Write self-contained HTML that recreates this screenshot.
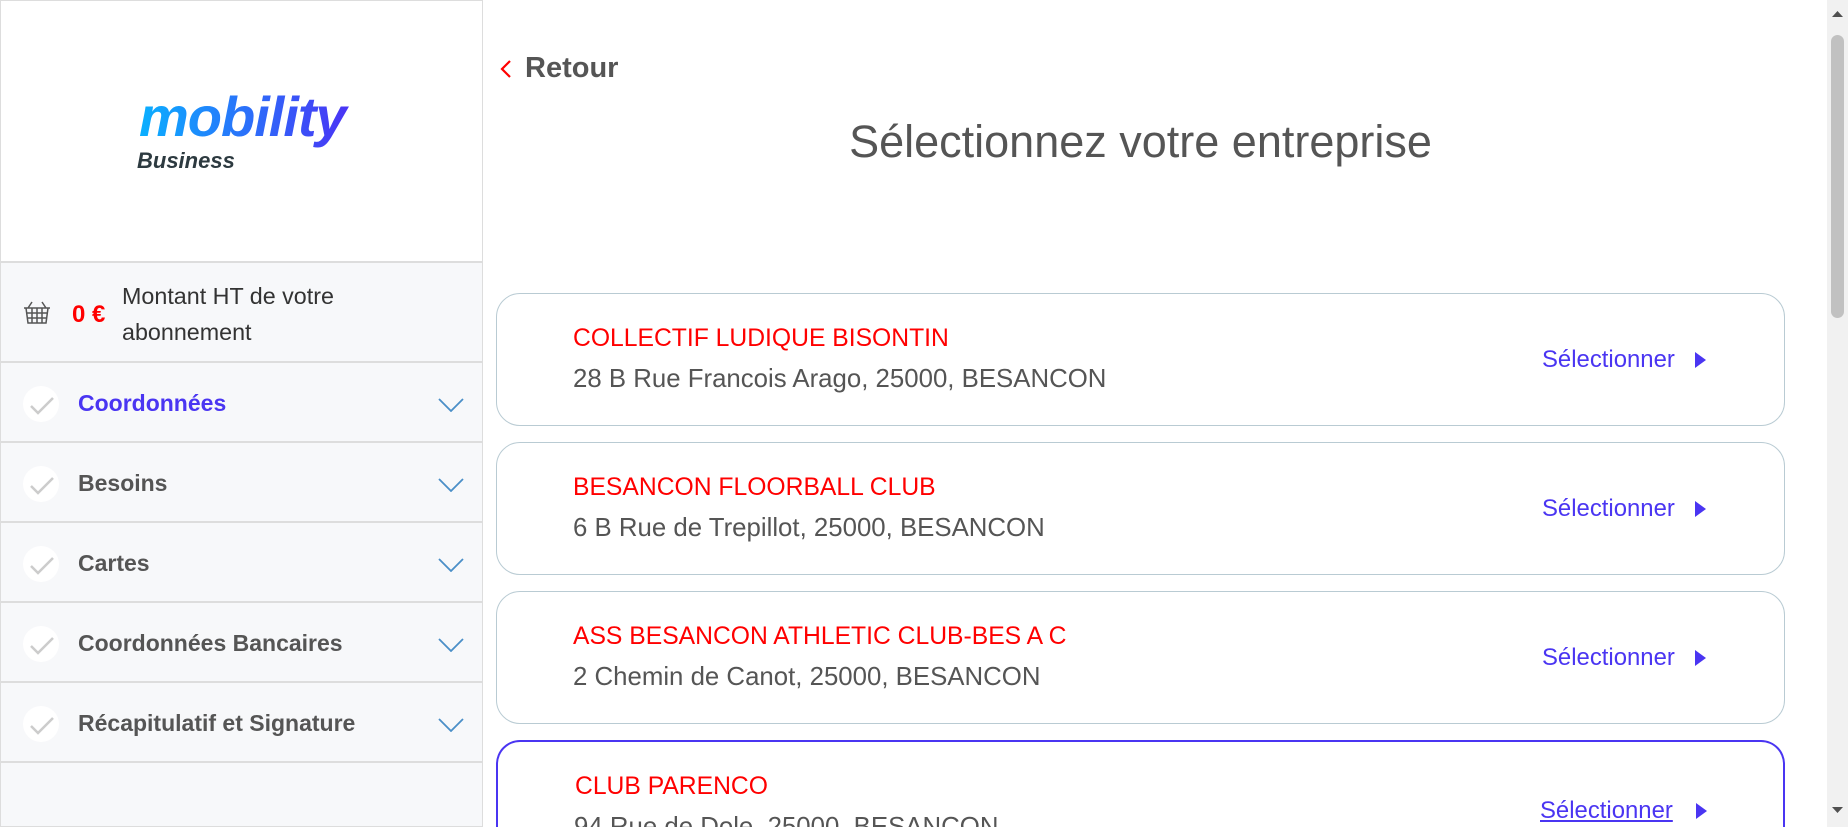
<!DOCTYPE html>
<html style="width:1848px;height:827px;overflow:hidden"><head><meta charset="utf-8"><style>
*{box-sizing:border-box;margin:0;padding:0}
body{width:1848px;height:827px;overflow:hidden;background:#fff;font-family:"Liberation Sans",Arial,sans-serif;position:relative}
#wrap{position:absolute;left:0;top:0;width:1848px;height:827px;overflow:hidden}
.side{position:absolute;left:0;top:0;width:483px;height:827px;background:#f7f8fa;border:1px solid #ddd}
.logo{height:262px;background:#fff;border-bottom:2px solid #ddd;position:relative}
.amt{height:100px;border-bottom:2px solid #ddd;position:relative}
.item{height:80px;border-bottom:2px solid #ddd;position:relative}
.chk{position:absolute;left:22px;top:23px;width:36px;height:36px;border-radius:50%;background:#fff}
.item .t{position:absolute;left:77px;top:27px;font-size:23px;font-weight:bold;color:#555}
.item svg.ch{position:absolute;left:437px;top:35px}
.card{position:absolute;left:496px;width:1289px;height:133px;border:1px solid #b9cbd3;border-radius:24px;overflow:hidden}
.card .n{position:absolute;left:76px;top:31px;font-size:24.7px;color:#f00}
.card .a{position:absolute;left:76px;top:71px;font-size:25.8px;color:#555;white-space:nowrap}
.card .s{position:absolute;left:1045px;top:52px;font-size:23.9px;color:#4a35f2}
.card svg.ar{position:absolute;left:1198px;top:58px}
</style></head><body><div id="wrap">
<div class="side">
 <div class="logo">
  <svg width="220" height="100" style="position:absolute;left:130px;top:80px">
   <defs><linearGradient id="g" x1="0" x2="1"><stop offset="0" stop-color="#0ab0ff"/><stop offset="1" stop-color="#4a33f5"/></linearGradient></defs>
   <text x="8" y="55" font-family="Liberation Sans" font-weight="bold" font-style="italic" font-size="56" fill="url(#g)" letter-spacing="-1">mobility</text>
   <text x="6" y="87" font-family="Liberation Sans" font-style="italic" font-weight="bold" font-size="22" fill="#2d3a40">Business</text>
  </svg>
 </div>
 <div class="amt">
  <svg width="28" height="26" style="position:absolute;left:22px;top:37px" fill="none" stroke="#555" stroke-width="1.5"><path d="M1 8h26M3 8l2 15h18l2-15M5 8l4-6M23 8l-4-6M9 8v15M14 8v15M19 8v15M4 13h20M4 18h20"/></svg>
  <div style="position:absolute;left:71px;top:38px;font-size:24px;font-weight:bold;color:#f00">0 €</div>
  <div style="position:absolute;left:121px;top:15px;font-size:23.3px;line-height:36px;color:#333">Montant HT de votre<br>abonnement</div>
 </div>
 <div class="item"><div class="chk"></div><svg style="position:absolute;left:28px;top:33px" width="26" height="20"><path d="M2 10l7 7L24 2" stroke="#ccc" stroke-width="2.5" fill="none"/></svg><div class="t" style="color:#4a35f2">Coordonnées</div><svg class="ch" width="26" height="14"><path d="M1 1l12 12L25 1" stroke="#4a8fc8" stroke-width="1.8" fill="none"/></svg></div>
 <div class="item"><div class="chk"></div><svg style="position:absolute;left:28px;top:33px" width="26" height="20"><path d="M2 10l7 7L24 2" stroke="#ccc" stroke-width="2.5" fill="none"/></svg><div class="t">Besoins</div><svg class="ch" width="26" height="14"><path d="M1 1l12 12L25 1" stroke="#4a8fc8" stroke-width="1.8" fill="none"/></svg></div>
 <div class="item"><div class="chk"></div><svg style="position:absolute;left:28px;top:33px" width="26" height="20"><path d="M2 10l7 7L24 2" stroke="#ccc" stroke-width="2.5" fill="none"/></svg><div class="t">Cartes</div><svg class="ch" width="26" height="14"><path d="M1 1l12 12L25 1" stroke="#4a8fc8" stroke-width="1.8" fill="none"/></svg></div>
 <div class="item"><div class="chk"></div><svg style="position:absolute;left:28px;top:33px" width="26" height="20"><path d="M2 10l7 7L24 2" stroke="#ccc" stroke-width="2.5" fill="none"/></svg><div class="t">Coordonnées Bancaires</div><svg class="ch" width="26" height="14"><path d="M1 1l12 12L25 1" stroke="#4a8fc8" stroke-width="1.8" fill="none"/></svg></div>
 <div class="item"><div class="chk"></div><svg style="position:absolute;left:28px;top:33px" width="26" height="20"><path d="M2 10l7 7L24 2" stroke="#ccc" stroke-width="2.5" fill="none"/></svg><div class="t">Récapitulatif et Signature</div><svg class="ch" width="26" height="14"><path d="M1 1l12 12L25 1" stroke="#4a8fc8" stroke-width="1.8" fill="none"/></svg></div>
</div>

<svg style="position:absolute;left:500px;top:60px" width="12" height="18"><path d="M10 1L2 9l8 8" stroke="#f00" stroke-width="2.2" fill="none"/></svg>
<div style="position:absolute;left:525px;top:52px;font-size:29px;font-weight:bold;color:#555">Retour</div>
<div style="position:absolute;left:496px;width:1289px;top:116px;text-align:center;font-size:45px;color:#555">Sélectionnez votre entreprise</div>

<div class="card" style="top:293px"><div class="n">COLLECTIF LUDIQUE BISONTIN</div><div class="a">28 B Rue Francois Arago, 25000, BESANCON</div><div class="s">Sélectionner</div><svg class="ar" width="12" height="16"><path d="M0 0l11 8L0 16z" fill="#4a35f2"/></svg></div>
<div class="card" style="top:442px"><div class="n">BESANCON FLOORBALL CLUB</div><div class="a">6 B Rue de Trepillot, 25000, BESANCON</div><div class="s">Sélectionner</div><svg class="ar" width="12" height="16"><path d="M0 0l11 8L0 16z" fill="#4a35f2"/></svg></div>
<div class="card" style="top:591px"><div class="n">ASS BESANCON ATHLETIC CLUB-BES A C</div><div class="a">2 Chemin de Canot, 25000, BESANCON</div><div class="s">Sélectionner</div><svg class="ar" width="12" height="16"><path d="M0 0l11 8L0 16z" fill="#4a35f2"/></svg></div>
<div class="card" style="top:740px;height:87px;border:2px solid #4a35f2;border-bottom:none;border-radius:24px 24px 0 0"><div class="n" style="left:77px">CLUB PARENCO</div><div class="a">94 Rue de Dole, 25000, BESANCON</div><div class="s" style="left:1042px;top:55px;text-decoration:underline">Sélectionner</div><svg class="ar" width="12" height="16" style="top:61px"><path d="M0 0l11 8L0 16z" fill="#4a35f2"/></svg></div>

<div style="position:absolute;left:1827px;top:0;width:21px;height:827px;background:#f1f1f1"></div>
<div style="position:absolute;left:1831px;top:35px;width:13px;height:283px;background:#c1c1c1;border-radius:7px"></div>
<svg style="position:absolute;left:1832px;top:10px" width="11" height="8"><path d="M0 7L5.5 1 11 7z" fill="#505050"/></svg>
<svg style="position:absolute;left:1832px;top:806px" width="11" height="8"><path d="M0 1L5.5 7 11 1z" fill="#505050"/></svg>
</div></body></html>
